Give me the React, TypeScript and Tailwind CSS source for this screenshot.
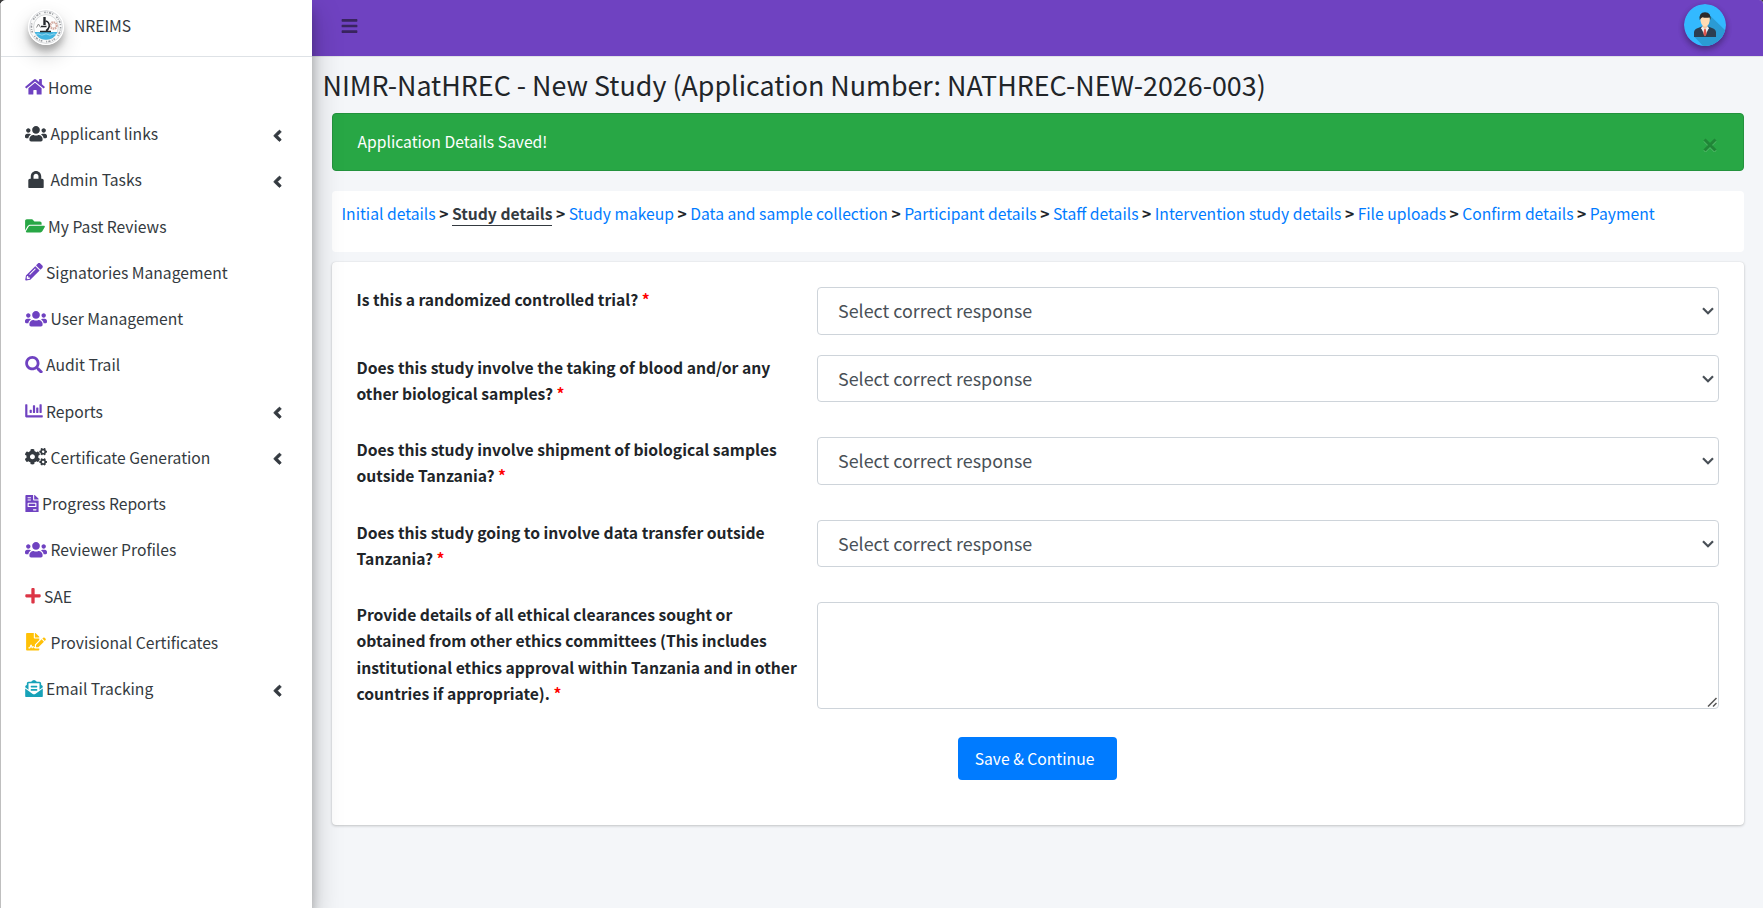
import React from "react";
import {
  FaHome, FaUsers, FaLock, FaFolderOpen, FaPencilAlt, FaSearch, FaChartBar, FaCogs,
  FaFileInvoice, FaPlus, FaFileSignature, FaEnvelopeOpenText, FaBars, FaAngleLeft,
} from "react-icons/fa";
import type { IconType } from "react-icons";

type NavItem = { label: string; icon: IconType; box: string; color: string; text: string; caret?: boolean };

const purple = "text-[#6f42c1]";
const dark = "text-[#343a40]";

const nav: NavItem[] = [
  { label: "Home", icon: FaHome, box: "w-5", color: purple, text: "ml-[3px]" },
  { label: "Applicant links", icon: FaUsers, box: "w-[22px]", color: dark, text: "ml-[3.5px]", caret: true },
  { label: "Admin Tasks", icon: FaLock, box: "w-[22px]", color: dark, text: "ml-[3.5px]", caret: true },
  { label: "My Past Reviews", icon: FaFolderOpen, box: "w-5", color: "text-[#28a745]", text: "ml-[3px]" },
  { label: "Signatories Management", icon: FaPencilAlt, box: "w-[18px]", color: purple, text: "ml-[3px]" },
  { label: "User Management", icon: FaUsers, box: "w-[22px]", color: purple, text: "ml-[3.5px]" },
  { label: "Audit Trail", icon: FaSearch, box: "w-[18px]", color: purple, text: "ml-[3px]" },
  { label: "Reports", icon: FaChartBar, box: "w-[18px]", color: purple, text: "ml-[3px]", caret: true },
  { label: "Certificate Generation", icon: FaCogs, box: "w-[22px]", color: dark, text: "ml-[3.5px]", caret: true },
  { label: "Progress Reports", icon: FaFileInvoice, box: "w-3.5", color: purple, text: "ml-[3px]" },
  { label: "Reviewer Profiles", icon: FaUsers, box: "w-[22px]", color: purple, text: "ml-[3.5px]" },
  { label: "SAE", icon: FaPlus, box: "w-4", color: "text-[#dc3545]", text: "ml-[3px]" },
  { label: "Provisional Certificates", icon: FaFileSignature, box: "w-[22px]", color: "text-[#ffc107]", text: "ml-[3.5px]" },
  { label: "Email Tracking", icon: FaEnvelopeOpenText, box: "w-[18px]", color: "text-[#17a2b8]", text: "ml-[3px]", caret: true },
];

const steps = [
  "Initial details", "Study details", "Study makeup", "Data and sample collection", "Participant details",
  "Staff details", "Intervention study details", "File uploads", "Confirm details", "Payment",
];

const questions = [
  { lines: ["Is this a randomized controlled trial?"], height: "h-[68px]", select: "h-12 pb-px" },
  { lines: ["Does this study involve the taking of blood and/or any", "other biological samples?"], height: "h-[82px]", select: "h-[47px]" },
  { lines: ["Does this study involve shipment of biological samples", "outside Tanzania?"], height: "h-[83px]", select: "h-12 pb-px" },
  { lines: ["Does this study going to involve data transfer outside", "Tanzania?"], height: "h-[82px]", select: "h-[47px]" },
];

const details = [
  "Provide details of all ethical clearances sought or",
  "obtained from other ethics committees (This includes",
  "institutional ethics approval within Tanzania and in other",
  "countries if appropriate).",
];

function Logo() {
  return (
    <svg viewBox="0 0 36 36" className="h-9 w-9 rounded-full shadow-[0_10px_20px_rgba(0,0,0,0.19),0_6px_6px_rgba(0,0,0,0.23)]">
      <circle cx="18" cy="18" r="18" fill="#fff" />
      <circle cx="18" cy="18" r="16.4" fill="#f9f9f9" stroke="#cfd2d5" strokeWidth="0.8" />
      <circle cx="18" cy="18" r="14.6" fill="none" stroke="#9a9da1" strokeWidth="1.6" strokeDasharray="1.6 1.1 0.8 1.4 2.2 1.2 1 4" />
      <circle cx="18" cy="18" r="12.4" fill="#fdfdfd" stroke="#b5b8bb" strokeWidth="0.5" />
      <path d="M6.6 23H29.4A12.3 12.3 0 0 1 6.6 23Z" fill="#42b4e0" />
      <path d="M8 25.5q2-1.4 4 0t4 0t4 0t4 0t4 0" fill="none" stroke="#a6def3" strokeWidth="0.8" />
      <circle cx="25.5" cy="16.5" r="3.2" fill="none" stroke="#d3aaa0" strokeWidth="2.2" strokeDasharray="1.5 0.6" />
      <path d="M8.5 18.5l2-3.5 2 3.5" fill="none" stroke="#888" strokeWidth="1" />
      <path d="M15.3 8h2.4v8h-2.4z" fill="#25282c" />
      <path d="M17.6 12q4 1 3.6 5.5-.6 3-3.2 4.2M13 17.5h5.5M12 22.6h11" fill="none" stroke="#25282c" strokeWidth="1.5" />
    </svg>
  );
}

function Avatar() {
  return (
    <svg viewBox="0 0 42 42" className="h-[42px] w-[42px] rounded-full shadow-[0_3px_6px_rgba(0,0,0,0.16),0_3px_6px_rgba(0,0,0,0.23)]">
      <clipPath id="disc"><circle cx="21" cy="21" r="21" /></clipPath>
      <g clipPath="url(#disc)">
        <path d="M0 0h42v42H0z" fill="#33b9ff" />
        <path d="M26.5 12L45 30V45H22L10.5 33Z" fill="#2b9bd4" />
      </g>
      <path d="M10 33v-4.5q0-3.5 4-4.5l3.8-1.500h6.400L28 24q4 1 4 4.500V33Z" fill="#2c3e50" />
      <path d="M18 22.5h6l.8 1.8L21 32l-3.8-7.7Z" fill="#eceff1" />
      <path d="M20.2 25h1.6l.9 5L21 32.5 19.3 30Z" fill="#e0564d" />
      <path d="M18.8 19h4.4v4L21 25.5 18.8 23Z" fill="#f3c9a0" />
      <path d="M16.4 13h9.4q.5 9-4.7 9.5Q16 22 16.4 13Z" fill="#ffdcb3" />
      <path d="M15.7 16Q14.6 8.300 21 8.300T26.400 16L25.600 13.600Q21 14.300 18.500 13.200 17 13.600 15.700 16Z" fill="#2b2b2b" />
    </svg>
  );
}

function Label({ lines }: { lines: string[] }) {
  return (
    <label className="w-[461px] shrink-0 whitespace-nowrap pl-[0.5px] font-bold leading-[26.4px]">
      {lines.map((line, i) => (
        <span key={line} className="block">
          {line}
          {i === lines.length - 1 && <span className="text-[#ff0000]"> *</span>}
        </span>
      ))}
    </label>
  );
}

export default function App() {
  return (
    <div className="h-[908px] w-[1763px] overflow-hidden bg-[#3b3b3b]">
      <div className="flex h-full overflow-hidden rounded-tl-[6px] rounded-tr-[4px] bg-[#f4f6f9] font-['Noto_Sans_CJK_SC','Noto_Sans',sans-serif] text-[15.68px] leading-[26.4px] text-[#212529]">
        <aside className="relative z-10 flex w-[312px] shrink-0 flex-col border-l border-[#bfbfbf] bg-white shadow-[0_14px_28px_rgba(0,0,0,0.25),0_10px_10px_rgba(0,0,0,0.22)]">
          <div className="flex h-[57px] items-center border-b border-[#dee2e6] pb-0.5 pl-[27px] text-[#343a40]">
            <Logo />
            <span className="ml-2.5 pb-px">NREIMS</span>
          </div>
          <nav className="flex flex-col pt-2">
            {nav.map(({ label, icon: Icon, box, color, text, caret }) => (
              <a key={label} className="flex h-[46.25px] items-center pl-6 pr-[30px] text-[#343a40]">
                <span className={`mb-0.5 flex shrink-0 justify-center ${box} ${color}`}><Icon className="h-[17.6px] w-full" /></span>
                <span className={text}>{label}</span>
                {caret && (
                  <FaAngleLeft stroke="currentColor" strokeWidth="24" className="ml-auto mt-0.5 h-[17.6px] w-[9px]" />
                )}
              </a>
            ))}
          </nav>
        </aside>
        <div className="flex min-w-0 grow flex-col">
          <header className="flex h-[57px] shrink-0 items-center justify-between border-b border-[#dee2e6] bg-[#6f42c1] pb-1.5 pl-[29px] pr-[37px]">
            <FaBars className="mt-0.5 h-[18px] w-[17px] text-[#39245f]" />
            <Avatar />
          </header>
          <main className="flex flex-col pl-5 pr-[19px]">
            <h1 className="-ml-[9.5px] h-14 whitespace-nowrap pt-[11px] text-[26.85px] leading-[34px]">
              NIMR-NatHREC - New Study (Application Number: NATHREC-NEW-2026-003)
            </h1>
            <div className="flex h-[58px] items-center justify-between rounded-[4px] border border-[#23923d] bg-[#28a745] pl-[24.5px] pr-[26px] text-white">
              <span>Application Details Saved!</span>
              <svg viewBox="0 0 14 14" className="mt-[5px] h-3.5 w-3.5" fill="none" strokeWidth="3">
                <path d="M1.5 2.5l11 11M12.500 2.500l-11 11" stroke="#53b96a" />
                <path d="M1.5 1.5l11 11M12.500 1.500l-11 11" stroke="#208637" />
              </svg>
            </div>
            <div className="mt-5 flex h-[61px] whitespace-nowrap rounded-[4px] bg-white pl-[9.5px] pt-2.5">
              {steps.map((step, i) => (
                <span key={step} className="flex h-[25px]">
                  {i > 0 && <b className="mx-[3.5px]">&gt;</b>}
                  {i === 1 ? (
                    <b className="border-b border-[#343a40] text-[#343a40]">{step}</b>
                  ) : (
                    <a className="text-[#007bff]">{step}</a>
                  )}
                </span>
              ))}
            </div>
            <form className="mt-2.5 flex h-[563px] flex-col rounded-[4px] bg-white pl-6 pr-[25px] pt-[25px] shadow-[0_0_1px_rgba(0,0,0,0.125),0_1px_3px_rgba(0,0,0,0.2)]">
              {questions.map(({ lines, height, select }) => (
                <div key={lines[0]} className={`flex ${height}`}>
                  <Label lines={lines} />
                  <div className={`flex grow items-center justify-between rounded-[4px] border border-[#ced4da] pl-5 pr-1 text-[17.9px] text-[#495057] ${select}`}>
                    <span>Select correct response</span>
                    <svg viewBox="0 0 12 8" className="h-2 w-3"><path d="M1 1.2l5 5 5-5" fill="none" stroke="#495057" strokeWidth="2.2" /></svg>
                  </div>
                </div>
              ))}
              <div className="flex h-[135px]">
                <Label lines={details} />
                <div className="relative flex h-[107px] grow">
                  <textarea className="grow resize-none rounded-[4px] border border-[#ced4da] bg-white" />
                  <svg viewBox="0 0 10 10" className="absolute bottom-0.5 right-0.5 h-2.5 w-2.5" fill="none" stroke="#555" strokeWidth="1.5">
                    <path d="M1 9.5L9.5 1M6 9.500L9.500 6" />
                  </svg>
                </div>
              </div>
              <button type="button" className="ml-[602px] h-[43px] w-[159px] rounded-[4px] bg-[#007bff] pr-1.5 pt-0.5 text-white">
                Save &amp; Continue
              </button>
            </form>
          </main>
        </div>
      </div>
    </div>
  );
}
